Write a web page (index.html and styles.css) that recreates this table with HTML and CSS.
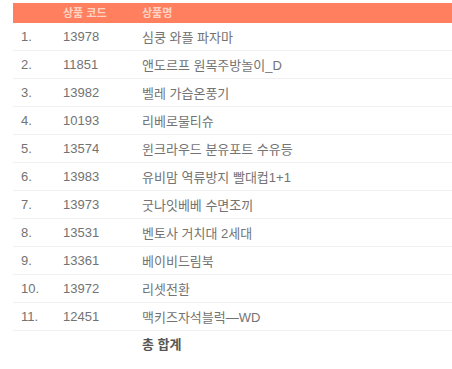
FILE: index.html
```html
<!DOCTYPE html>
<html lang="ko">
<head>
<meta charset="utf-8">
<link rel="stylesheet" href="styles.css">
</head>
<body>
<table class="sales">
  <thead>
    <tr><th class="c-no"></th><th class="c-code">상품 코드</th><th class="c-name">상품명</th></tr>
  </thead>
  <tbody>
    <tr><td class="c-no">1.</td><td class="c-code">13978</td><td class="c-name">심쿵 와플 파자마</td></tr>
    <tr><td class="c-no">2.</td><td class="c-code">11851</td><td class="c-name">앤도르프 원목주방놀이_D</td></tr>
    <tr><td class="c-no">3.</td><td class="c-code">13982</td><td class="c-name">벨레 가습온풍기</td></tr>
    <tr><td class="c-no">4.</td><td class="c-code">10193</td><td class="c-name">리베로물티슈</td></tr>
    <tr><td class="c-no">5.</td><td class="c-code">13574</td><td class="c-name">윈크라우드 분유포트 수유등</td></tr>
    <tr><td class="c-no">6.</td><td class="c-code">13983</td><td class="c-name">유비맘 역류방지 빨대컵1+1</td></tr>
    <tr><td class="c-no">7.</td><td class="c-code">13973</td><td class="c-name">굿나잇베베 수면조끼</td></tr>
    <tr><td class="c-no">8.</td><td class="c-code">13531</td><td class="c-name">벤토사 거치대 2세대</td></tr>
    <tr><td class="c-no">9.</td><td class="c-code">13361</td><td class="c-name">베이비드림북</td></tr>
    <tr><td class="c-no">10.</td><td class="c-code">13972</td><td class="c-name">리셋전환</td></tr>
    <tr><td class="c-no">11.</td><td class="c-code">12451</td><td class="c-name">맥키즈자석블럭—WD</td></tr>
  </tbody>
  <tfoot>
    <tr><td class="c-no"></td><td class="c-code"></td><td class="c-name total">총 합계</td></tr>
  </tfoot>
</table>
</body>
</html>
```

FILE: styles.css
```css
html, body {
  background: #ffffff;
}
body {
  margin: 3px 0 0 13px;
  font-family: "Liberation Sans", "Noto Sans CJK KR", sans-serif;
  overflow: hidden;
}
.sales {
  width: 439px;
  border-collapse: collapse;
  table-layout: fixed;
}
.sales th {
  background: #ff7f5e;
  color: #ffd3c4;
  font-size: 11px;
  font-weight: bold;
  text-align: left;
  height: 20px;
  padding: 0;
  line-height: 20px;
}
.sales td {
  height: 27px;
  padding: 0;
  font-size: 13px;
  color: #737373;
  border-bottom: 1px solid #f0f0f0;
  white-space: nowrap;
}
.c-no {
  width: 42px;
  padding-left: 8px !important;
  box-sizing: border-box;
}
.c-code {
  width: 79px;
  padding-left: 8px !important;
  box-sizing: border-box;
}
.c-name {
  padding-left: 8px !important;
}
.sales tfoot td {
  border-bottom: none;
  height: 24px;
}
.sales td.total {
  font-weight: bold;
  color: #555555;
}
```
